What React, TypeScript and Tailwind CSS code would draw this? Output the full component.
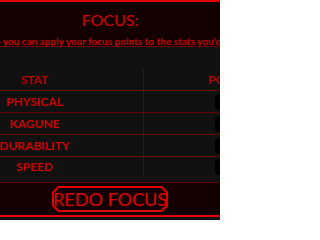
import React from 'react';

const stats = ['PHYSICAL', 'KAGUNE', 'DURABILITY', 'SPEED'];

export default function App() {
  return (
    <div className="w-[220px] h-[220px] overflow-hidden bg-[#111111] font-['Lato',sans-serif]">
      {/* header */}
      <div className="flex flex-col items-center border-t-2 border-[#e00000] border-b border-b-[#6a0000] bg-[#140000] h-[47px]">
        <div className="mt-[9px] text-[16px] leading-[18px] text-[#d40000]">FOCUS:</div>
        <div className="mt-[6px] whitespace-nowrap text-[10px] leading-[12px] font-bold text-[#c80000]">
          Here you can apply your focus points to the stats you'd like.
        </div>
      </div>

      {/* table */}
      <div className="h-[135px] pt-[22px]">
        <div className="flex ml-[-74px] w-[420px]">
          <div className="w-[218px] border-r border-[#6a0000]">
            <div className="h-[22px] flex items-center justify-center text-[12px] font-bold text-[#b00000] border-b border-[#6a0000]">STAT</div>
            {stats.map((s, i) => (
              <div
                key={s}
                className={
                  i < 3
                    ? 'h-[22px] flex items-center justify-center text-[12px] font-bold text-[#c80000] border-b border-[#6a0000]'
                    : 'h-[20px] flex items-center justify-center text-[12px] font-bold text-[#c80000]'
                }
              >
                {s}
              </div>
            ))}
          </div>
          <div className="w-[200px]">
            <div className="h-[22px] flex items-center pl-[64px] text-[12px] font-bold text-[#b00000] border-b border-[#6a0000]">POINTS</div>
            {stats.map((s, i) => (
              <div
                key={s}
                className={
                  i < 3
                    ? 'h-[22px] flex items-center pl-[71px] border-b border-[#6a0000]'
                    : 'h-[20px] flex items-center pl-[71px]'
                }
              >
                <div className="w-[30px] h-[16px] rounded-[4px] bg-black" />
              </div>
            ))}
          </div>
        </div>
      </div>

      {/* footer */}
      <div className="flex justify-center items-center h-[35px] border-t border-[#6a0000] border-b-2 border-b-[#e00000] bg-[#140000]">
        <div className="w-[116px] h-[26px] bg-[#e00000] p-[2px] [clip-path:polygon(6px_0,calc(100%-6px)_0,100%_6px,100%_calc(100%-6px),calc(100%-6px)_100%,6px_100%,0_calc(100%-6px),0_6px)]">
          <div className="w-full h-full bg-[#140000] flex items-center justify-center whitespace-nowrap text-[18px] leading-none text-[#e00000] [clip-path:polygon(5px_0,calc(100%-5px)_0,100%_5px,100%_calc(100%-5px),calc(100%-5px)_100%,5px_100%,0_calc(100%-5px),0_5px)]">
            REDO FOCUS
          </div>
        </div>
      </div>
    </div>
  );
}
